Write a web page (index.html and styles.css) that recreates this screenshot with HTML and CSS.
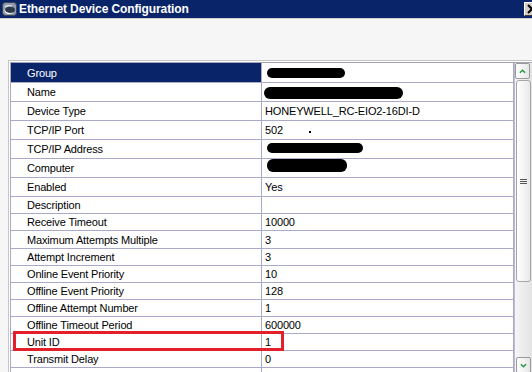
FILE: index.html
```html
<!DOCTYPE html>
<html>
<head>
<meta charset="utf-8">
<link rel="stylesheet" href="styles.css">
</head>
<body>
<div class="titlebar">
  <svg class="appicon" viewBox="0 0 15 14" width="15" height="14">
    <rect x="0.5" y="0.5" width="14" height="13" rx="3" fill="#8f9cae" stroke="#3a4450"/>
    <ellipse cx="8" cy="8" rx="5" ry="3.4" fill="#2c3a4c"/>
    <path d="M2.5 6.5 Q3 10.5 8 11 Q12 11 13 8.5 Q11 12.5 6 12 Q2 11 2.5 6.5Z" fill="#fff"/>
    <path d="M3 5 Q6 3 10 4" stroke="#e8edf3" stroke-width="1.2" fill="none"/>
  </svg>
  <span class="title">Ethernet Device Configuration</span>
  <span class="closebtn">
    <svg viewBox="0 0 14 12" width="14" height="12"><path d="M3 2 L11 10 M11 2 L3 10" stroke="#000" stroke-width="2"/></svg>
  </span>
</div>
<div class="frame">
  <div class="inner">
    <div class="grid">
      <div class="row tall first selected"><div class="label">Group</div><div class="value"><span class="blob b-group"></span></div></div>
      <div class="row tall"><div class="label">Name</div><div class="value"><span class="blob b-name"></span></div></div>
      <div class="row tall"><div class="label">Device Type</div><div class="value">HONEYWELL_RC-EIO2-16DI-D</div></div>
      <div class="row tall"><div class="label">TCP/IP Port</div><div class="value">502<span class="speck"></span></div></div>
      <div class="row tall"><div class="label">TCP/IP Address</div><div class="value"><span class="blob b-addr"></span></div></div>
      <div class="row tall"><div class="label">Computer</div><div class="value"><span class="blob b-comp"></span></div></div>
      <div class="row tall"><div class="label">Enabled</div><div class="value">Yes</div></div>
      <div class="row"><div class="label">Description</div><div class="value"></div></div>
      <div class="row"><div class="label">Receive Timeout</div><div class="value">10000</div></div>
      <div class="row mid"><div class="label">Maximum Attempts Multiple</div><div class="value">3</div></div>
      <div class="row"><div class="label">Attempt Increment</div><div class="value">3</div></div>
      <div class="row"><div class="label">Online Event Priority</div><div class="value">10</div></div>
      <div class="row"><div class="label">Offline Event Priority</div><div class="value">128</div></div>
      <div class="row"><div class="label">Offline Attempt Number</div><div class="value">1</div></div>
      <div class="row"><div class="label">Offline Timeout Period</div><div class="value">600000</div></div>
      <div class="row"><div class="label">Unit ID</div><div class="value">1</div></div>
      <div class="row"><div class="label">Transmit Delay</div><div class="value">0</div></div>
      <div class="row last"><div class="label"></div><div class="value">7</div></div>
      <div class="highlight"></div>
    </div>
    <div class="scrollbar">
      <div class="sbtn up">
        <svg viewBox="0 0 15 15" width="15" height="15"><path d="M4.5 9 L7.5 6 L10.5 9" stroke="#1f9a3c" stroke-width="1.6" fill="none"/></svg>
      </div>
      <div class="thumb">
        <svg viewBox="0 0 7 5" width="7" height="5"><path d="M0 0.5 H7 M0 2.5 H7 M0 4.5 H7" stroke="#555" stroke-width="1"/></svg>
      </div>
      <div class="sbtn down">
        <svg viewBox="0 0 15 15" width="15" height="15"><path d="M4.5 6 L7.5 9 L10.5 6" stroke="#1f9a3c" stroke-width="1.6" fill="none"/></svg>
      </div>
    </div>
  </div>
</div>
</body>
</html>
```

FILE: styles.css
```css
html, body {
  margin: 0;
  height: 100%;
  overflow: hidden;
  background: #f6f6f6;
  font-family: "Liberation Sans", Arial, sans-serif;
  font-size: 11px;
  color: #000;
}

.titlebar {
  display: flex;
  align-items: center;
  height: 18px;
  background: #0a246a;
  border-bottom: 1px solid #d2d2d2;
  overflow: hidden;
}

.appicon {
  flex-shrink: 0;
  margin-left: 2px;
}

.title {
  color: #fff;
  font-weight: bold;
  font-size: 12px;
  letter-spacing: -0.1px;
  margin-left: 2px;
  white-space: nowrap;
}

.closebtn {
  flex-shrink: 0;
  margin-left: auto;
  margin-right: -8px;
  width: 16px;
  height: 14px;
  box-sizing: border-box;
  background: #d4d0c8;
  border: 1px solid;
  border-color: #fff #404040 #404040 #fff;
  display: flex;
  align-items: center;
  justify-content: center;
}

.frame {
  margin: 41px 0 0 8px;
  border-top: 1px solid #c6c6c6;
  border-left: 1px solid #c6c6c6;
  padding: 1px 0 0 1px;
  background: #fff;
}

.inner {
  display: flex;
  border-top: 1px solid #a4a4b4;
  border-left: 1px solid #a9a9c6;
  background: #fff;
}

.grid {
  position: relative;
  width: 503px;
  flex-shrink: 0;
}

.row {
  display: flex;
  height: 17px;
  box-sizing: border-box;
  border-bottom: 1px solid #a9a9c9;
}

.row.tall { height: 19px; }
.row.first { height: 20px; }
.row.mid { height: 18px; }

.label {
  width: 251px;
  box-sizing: border-box;
  padding-left: 16px;
  border-right: 1px solid #a9a9c9;
  display: flex;
  align-items: center;
  white-space: nowrap;
  letter-spacing: -0.15px;
}

.value {
  width: 252px;
  box-sizing: border-box;
  padding-left: 3px;
  border-right: 1px solid #a9a9c9;
  display: flex;
  align-items: center;
  white-space: nowrap;
  letter-spacing: -0.15px;
}

.row.last .value { align-items: flex-start; padding-top: 3px; }

.selected .label {
  background: #0a246a;
  color: #fff;
}

.blob {
  display: inline-block;
  background: #000;
  border-radius: 6px;
}

.b-group { width: 78px; height: 10px; margin-left: 2px; }
.b-name { width: 139px; height: 12px; margin-left: -1px; margin-top: 2px; border-radius: 7px; }
.b-addr { width: 96px; height: 10px; margin-left: 2px; margin-top: -3px; }
.b-comp { width: 80px; height: 13px; margin-left: 2px; margin-top: -6px; }

.speck {
  display: inline-block;
  width: 2px;
  height: 2px;
  background: #000;
  margin-left: 26px;
  margin-top: 4px;
}

.highlight {
  position: absolute;
  left: 2px;
  top: 268px;
  width: 271px;
  height: 20px;
  box-sizing: border-box;
  border: 3px solid #e3202a;
}

.scrollbar {
  width: 18px;
  flex-shrink: 0;
  display: flex;
  flex-direction: column;
  align-items: flex-start;
  background: linear-gradient(to right, #f6f6f6, #e2e2e2);
  border-left: 1px solid #bdbdc8;
}

.sbtn {
  width: 15px;
  height: 16px;
  box-sizing: border-box;
  border: 1px solid #9a9a9a;
  border-radius: 2px;
  background: linear-gradient(to right, #ffffff, #e6e6e6);
  display: flex;
  align-items: center;
  justify-content: center;
}

.thumb {
  width: 15px;
  height: 202px;
  margin-top: 1px;
  margin-left: 1px;
  box-sizing: border-box;
  border: 1px solid #a6a6a6;
  border-radius: 3px;
  background: linear-gradient(to right, #ffffff, #e9e9e9);
  display: flex;
  align-items: center;
  justify-content: center;
}

.sbtn.down {
  margin-top: 75px;
  margin-left: 1px;
}
```
